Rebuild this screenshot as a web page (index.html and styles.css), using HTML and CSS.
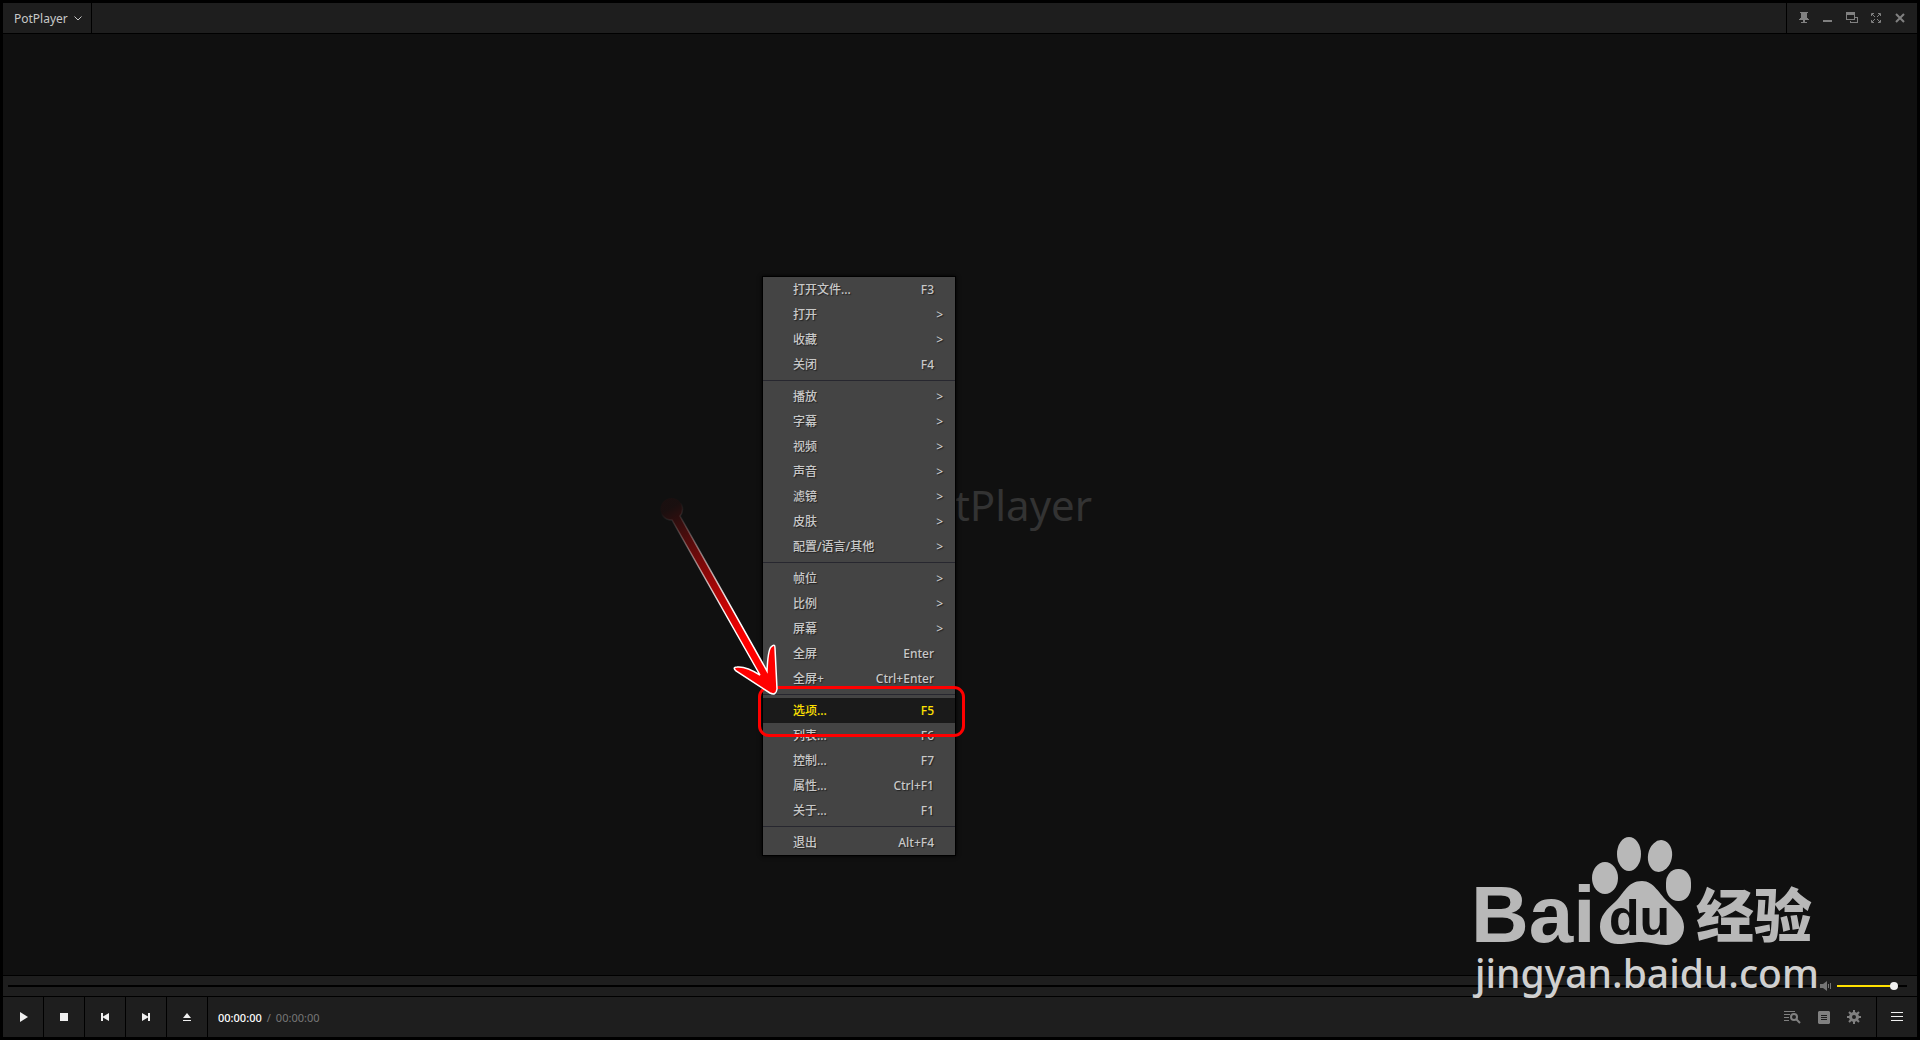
FILE: index.html
```html
<!DOCTYPE html>
<html lang="zh-CN">
<head>
    <meta charset="UTF-8">
    <meta name="viewport" content="width=device-width, initial-scale=1.0">
    <title>PotPlayer</title>
    <link rel="stylesheet" href="styles.css">
</head>
<body>
    <div class="player">
        <header class="titlebar">
            <button class="app-menu" type="button">PotPlayer
                <svg width="8" height="5" viewBox="0 0 8 5"><path d="M.5.5 4 4 7.5.5"/></svg>
            </button>
            <div class="window-buttons">
                <button type="button" aria-label="置顶"><svg width="10" height="12" viewBox="0 0 10 12"><path class="fill" d="M1 0h8v1H8v5h1v1h1v1H0V7h1V6h1V1H1zM4 8h2v2h2v1H2v-1h2z"/></svg></button>
                <button type="button" aria-label="最小化"><svg width="10" height="12" viewBox="0 0 10 12"><path class="fill" d="M0 8h9v2H0z"/></svg></button>
                <button type="button" aria-label="还原"><svg width="12" height="12" viewBox="0 0 12 12"><path class="fill" d="M0 0h9v8H0zM1 3v4h7V3zM9 5h3v6H4V9h1v1h6V6H9z" fill-rule="evenodd"/></svg></button>
                <button type="button" aria-label="全屏"><svg width="10" height="10" viewBox="0 0 10 10"><path d="M.5 3V.5H3M7 .5h2.5V3M.5 7v2.5H3M7 9.5h2.5V7M1 1l3 3M9 1 6 4M1 9l3-3M9 9 6 6"/></svg></button>
                <button type="button" aria-label="退出"><svg width="10" height="10" viewBox="0 0 10 10"><path class="cross" d="m1 1 8 8M9 1 1 9"/></svg></button>
            </div>
        </header>

        <main class="stage">
            <div class="brand">
                <svg width="60" height="60" viewBox="0 0 60 60"><circle cx="30" cy="30" r="28"/><path d="m23 18 20 12-20 12z"/></svg>
                <span>PotPlayer</span>
            </div>
        </main>

        <div class="seekbar">
            <input class="seek" type="range" min="0" max="100" value="0" aria-label="进度">
            <button class="mute" type="button" aria-label="静音"><svg width="12" height="10" viewBox="0 0 12 10"><path class="fill" d="M0 3h3l4-3v10L3 7H0zM8 3h1v4H8zM10 2h1v6h-1z"/></svg></button>
            <input class="volume" type="range" min="0" max="100" value="86" aria-label="音量">
        </div>

        <footer class="controls">
            <button type="button" aria-label="播放"><svg width="10" height="10" viewBox="0 0 10 10"><path class="fill" d="M2 0 10 5 2 10z"/></svg></button>
            <button type="button" aria-label="停止"><svg width="10" height="10" viewBox="0 0 10 10"><path class="fill" d="M1 1h8v8H1z"/></svg></button>
            <button type="button" aria-label="上一个"><svg width="10" height="10" viewBox="0 0 10 10"><path class="fill" d="M1 1h2v3.500L9 1v8L3 5.500V9H1z"/></svg></button>
            <button type="button" aria-label="下一个"><svg width="10" height="10" viewBox="0 0 10 10"><path class="fill" d="M9 1H7v3.500L1 1v8l6-3.500V9h2z"/></svg></button>
            <button type="button" aria-label="打开"><svg width="10" height="10" viewBox="0 0 10 10"><path class="fill" d="M5 1l4 5H1zM1 8h8v1H1z"/></svg></button>
            <p class="time"><strong>00:00:00</strong><span>/</span><span>00:00:00</span></p>
            <div class="tools">
                <button type="button" aria-label="搜索列表"><svg width="17" height="14" viewBox="0 0 17 14"><path d="M0 1.500h11M0 4.500h6M0 7.500h5M0 10.500h5"/><circle class="thick" cx="10" cy="7" r="3"/><path class="thick" d="m12 9 4 4"/></svg></button>
                <button type="button" aria-label="播放列表"><svg width="12" height="13" viewBox="0 0 12 13"><path class="fill" fill-rule="evenodd" d="M1 0h10l1 1v11l-1 1H1l-1-1V1zM3 4v1h6V4zM3 6v1h6V6zM3 8v1h6V8z"/></svg></button>
                <button type="button" aria-label="选项"><svg width="14" height="14" viewBox="0 0 14 14"><circle class="gear" cx="7" cy="7" r="3.500"/><path class="teeth" d="M7 0v3M7 11v3M0 7h3M11 7h3M2 2l2 2M10 10l2 2M12 2l-2 2M4 10l-2 2"/></svg></button>
            </div>
            <button class="list-toggle" type="button" aria-label="菜单"><svg width="12" height="10" viewBox="0 0 12 10"><path class="fill" d="M0 0h12v1H0zM0 4h12v1H0zM0 8h12v1H0z"/></svg></button>
        </footer>
    </div>

    <nav class="menu" aria-label="右键菜单">
        <button type="button">打开文件...<kbd>F3</kbd></button>
        <button class="sub" type="button">打开</button>
        <button class="sub" type="button">收藏</button>
        <button type="button">关闭<kbd>F4</kbd></button>
        <hr>
        <button class="sub" type="button">播放</button>
        <button class="sub" type="button">字幕</button>
        <button class="sub" type="button">视频</button>
        <button class="sub" type="button">声音</button>
        <button class="sub" type="button">滤镜</button>
        <button class="sub" type="button">皮肤</button>
        <button class="sub" type="button">配置/语言/其他</button>
        <hr>
        <button class="sub" type="button">帧位</button>
        <button class="sub" type="button">比例</button>
        <button class="sub" type="button">屏幕</button>
        <button type="button">全屏<kbd>Enter</kbd></button>
        <button type="button">全屏+<kbd>Ctrl+Enter</kbd></button>
        <hr>
        <button class="active" type="button">选项...<kbd>F5</kbd></button>
        <button type="button">列表...<kbd>F6</kbd></button>
        <button type="button">控制...<kbd>F7</kbd></button>
        <button type="button">属性...<kbd>Ctrl+F1</kbd></button>
        <button type="button">关于...<kbd>F1</kbd></button>
        <hr>
        <button type="button">退出<kbd>Alt+F4</kbd></button>
    </nav>

    <div class="highlight-box"></div>
    <svg class="arrow" width="150" height="220" viewBox="0 0 150 220">
        <defs>
            <linearGradient id="fade" gradientUnits="userSpaceOnUse" x1="20" y1="18" x2="95" y2="150">
                <stop offset="0" stop-color="#f00" stop-opacity=".04"/>
                <stop offset="1" stop-color="#f00"/>
            </linearGradient>
            <linearGradient id="edge" gradientUnits="userSpaceOnUse" x1="20" y1="18" x2="80" y2="125">
                <stop offset="0" stop-color="#fff" stop-opacity="0"/>
                <stop offset="1" stop-color="#fff"/>
            </linearGradient>
        </defs>
        <path d="M22 30A11 11 0 1 1 30 26L117 181Q118 160 121 157Q125 153 125 158L127 199Q126 206 120 203L86 181Q82 177 87 177Q96 176 110 185Z"/>
    </svg>

    <svg class="watermark" width="350" height="180" viewBox="0 0 350 180">
        <ellipse cx="135" cy="58" rx="13" ry="16"/>
        <ellipse cx="159" cy="34" rx="12" ry="17"/>
        <ellipse cx="190" cy="36" rx="12" ry="16" transform="rotate(10 190 36)"/>
        <rect x="196" y="49" width="25" height="32" rx="12" ry="14"/>
        <path d="M172 61c-15 0-18 13-27 21-9 8-15 14-15 25 0 11 8 17 18 17 9 0 15-2 24-2s15 3 24 3c11 0 18-8 18-18 0-10-7-16-15-24-10-9-15-22-27-22z"/>
        <text class="wm-bai" x="1" y="122">Bai</text>
        <text class="wm-du" x="139" y="115">du</text>
        <text class="wm-cn" x="226" y="117">经验</text>
        <text class="wm-url" x="5" y="168">jingyan.baidu.com</text>
    </svg>
</body>
</html>
```
FILE: styles.css
```css
* {
    box-sizing: border-box;
}

body {
    margin: 0;
    background-color: #000;
    color: #c8c8c8;
    font-family: "Noto Sans", "Noto Sans CJK SC", sans-serif;
    font-size: 12px;
    overflow: hidden;
}

button {
    margin: 0;
    padding: 0;
    border: none;
    background: none;
    color: inherit;
    font: inherit;
}

svg path,
svg circle {
    fill: none;
    stroke: currentColor;
}

svg .fill {
    fill: currentColor;
    stroke: none;
}

svg .thick,
svg .cross {
    stroke-width: 2;
}

.player {
    display: flex;
    flex-direction: column;
    gap: 1px;
    height: 100vh;
    padding: 3px;
}

/* title bar */
.titlebar {
    display: flex;
    justify-content: space-between;
    height: 30px;
    background-color: #1e1e1e;
}

.app-menu {
    display: flex;
    align-items: center;
    gap: 6px;
    padding: 0 9px 0 11px;
    border-right: 1px solid #000;
}

.window-buttons {
    display: flex;
    align-items: center;
    padding: 0 5px;
    border-left: 1px solid #000;
    color: #808080;
}

.window-buttons button {
    display: flex;
    justify-content: center;
    width: 24px;
}

/* video area */
.stage {
    display: flex;
    flex: 1;
    align-items: center;
    justify-content: center;
    background-color: #101010;
}

.brand {
    display: flex;
    align-items: center;
    gap: 16px;
    color: #333;
    font-size: 42px;
    line-height: 60px;
}

/* seek and volume */
.seekbar {
    display: flex;
    align-items: center;
    height: 20px;
    padding: 0 10px 0 5px;
    background-color: #1e1e1e;
}

.seekbar input {
    height: 8px;
    margin: 0;
    appearance: none;
    background: linear-gradient(#000, #000) center / 100% 2px no-repeat;
}

.seek {
    flex: 1;
}

.seek::-webkit-slider-thumb {
    appearance: none;
    width: 1px;
    height: 1px;
}

.mute {
    display: flex;
    margin: 0 5px;
    color: #757575;
}

.seekbar .volume {
    width: 70px;
    background: linear-gradient(to right, #ffe000 58px, #000 58px) center / 100% 2px no-repeat;
}

.volume::-webkit-slider-thumb {
    appearance: none;
    width: 8px;
    height: 8px;
    border-radius: 50%;
    background-color: #f0f0f0;
}

/* bottom controls */
.controls {
    display: flex;
    height: 40px;
    background-color: #1e1e1e;
    color: #f0f0f0;
}

.controls > button {
    display: flex;
    align-items: center;
    justify-content: center;
    width: 41px;
    border-right: 1px solid #000;
}

.time {
    display: flex;
    align-items: center;
    gap: 5px;
    margin: 0 0 0 10px;
    color: #777;
    font-size: 11px;
}

.time strong {
    color: #fff;
    font-weight: 500;
}

.tools {
    display: flex;
    align-items: center;
    gap: 17px;
    margin-left: auto;
    padding-right: 15px;
    color: #808080;
}

.tools button {
    display: flex;
}

svg .gear {
    stroke-width: 3;
}

svg .teeth {
    stroke-width: 2;
}

.controls .list-toggle {
    border-right: none;
    border-left: 1px solid #000;
}

/* context menu */
.menu {
    position: absolute;
    top: 276px;
    left: 762px;
    width: 194px;
    border: 1px solid #000;
    background-color: #444;
    box-shadow: 0 0 4px #000;
    font-weight: 500;
}

.menu button {
    display: flex;
    align-items: center;
    justify-content: space-between;
    width: 100%;
    height: 25px;
    padding: 0 21px 0 30px;
    line-height: 16px;
    text-shadow: 1px 1px 1px #222;
}

.menu kbd {
    font-family: inherit;
}

.menu .sub {
    padding-right: 12px;
}

.menu .sub::after {
    content: ">";
}

.menu .active {
    background-color: #1a1a1a;
    color: #ffe100;
}

.menu hr {
    height: 1px;
    margin: 3px 0;
    border: none;
    background-color: #27272f;
}

/* marks over the window */
.highlight-box {
    position: absolute;
    top: 686px;
    left: 758px;
    width: 207px;
    height: 51px;
    border: 3px solid #f00;
    border-radius: 11px;
}

.arrow {
    position: absolute;
    top: 490px;
    left: 650px;
}

.arrow path {
    fill: url(#fade);
    stroke: url(#edge);
    stroke-width: 1.5;
}

.watermark {
    position: absolute;
    top: 820px;
    left: 1470px;
    fill: #b8b8b8;
    font-family: "Liberation Sans", sans-serif;
    font-weight: bold;
}

.watermark path {
    fill: inherit;
    stroke: none;
}

.wm-bai {
    font-size: 80px;
}

.wm-du {
    fill: #101010;
    font-size: 50px;
}

.wm-cn {
    font-family: "Noto Sans CJK SC", sans-serif;
    font-size: 58px;
    font-weight: 900;
}

.wm-url {
    fill: #d0d0d0;
    font-family: "Noto Sans", sans-serif;
    font-size: 39px;
    font-weight: 500;
}
```
